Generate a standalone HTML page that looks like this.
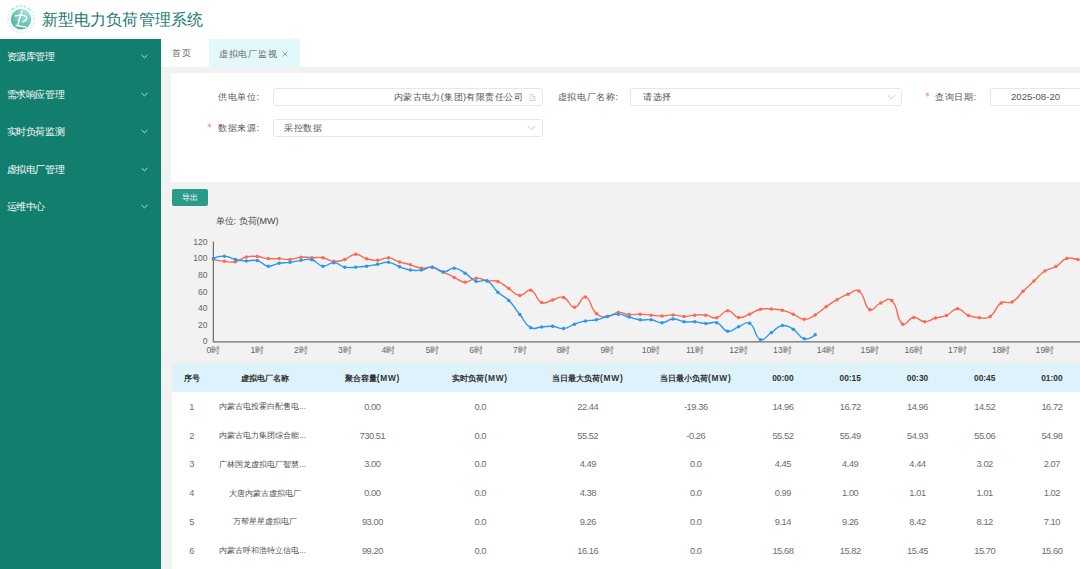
<!DOCTYPE html>
<html><head><meta charset="utf-8">
<style>
*{box-sizing:border-box;margin:0;padding:0}
html,body{width:1080px;height:569px;overflow:hidden;background:#fff;font-family:"Liberation Sans",sans-serif;position:relative}
.abs{position:absolute;white-space:nowrap}
#header{position:absolute;left:0;top:0;width:1080px;height:39px;background:#fff}
#title{left:41.5px;top:9.8px;font-size:16px;color:#217870;letter-spacing:0.2px;font-weight:500}
#side{position:absolute;left:0;top:39px;width:161px;height:530px;background:#127e6e}
.mi{position:absolute;left:6.5px;font-size:10px;color:#fff;line-height:12px;letter-spacing:-0.35px}
.chev{position:absolute;left:141px;width:7px;height:5px}
#tabs{position:absolute;left:161px;top:39px;width:919px;height:28px;background:#fff}
#content{position:absolute;left:161px;top:67px;width:919px;height:502px;background:#f2f2f2}
#card{position:absolute;left:171px;top:73px;width:909px;height:108.6px;background:#fff}
.lbl{font-size:9px;color:#555;line-height:12px;letter-spacing:0.6px}
.inp{position:absolute;border:1px solid #e6e6e6;border-radius:3px;background:#fff;height:18px}
.star{color:#f56c6c;font-size:9px}
.btn{position:absolute;left:172px;top:189px;width:36px;height:17px;background:#2a9b88;border-radius:2px;color:#fff;font-size:8px;text-align:center;line-height:18.5px;letter-spacing:0.3px}
.yl{font-size:8.6px;color:#666;text-align:right;width:30px;line-height:10px}
.xl{font-size:8.6px;color:#666;line-height:10px}
#thead{position:absolute;left:171.5px;top:363px;width:908px;height:29px;background:#ddf2fb}
#tbody{position:absolute;left:171.5px;top:392px;width:908px;height:177px;background:#fff}
.th{position:absolute;font-size:8.4px;font-weight:bold;color:#333;text-align:center;line-height:12px}
.td{position:absolute;font-size:9.3px;letter-spacing:-0.45px;color:#6e6e6e;text-align:center;line-height:12px}
.nm{font-size:8px;letter-spacing:0;color:#505050;padding-top:0.6px}
.num{letter-spacing:-0.35px}
</style></head><body>
<div id="header">
<svg class="abs" style="left:0;top:0" width="40" height="38" viewBox="0 0 40 38">
<defs><radialGradient id="lg" cx="0.72" cy="0.2" r="0.95"><stop offset="0" stop-color="#9ee0d8"/><stop offset="0.55" stop-color="#72c6b7"/><stop offset="1" stop-color="#4cab95"/></radialGradient></defs>
<circle cx="21" cy="19.2" r="13.2" fill="none" stroke="#d6efea" stroke-width="2.4" stroke-dasharray="1.2 1.8"/>
<g fill="#c2e7df"><circle cx="13" cy="9" r="1.2"/><circle cx="17" cy="6.6" r="1.1"/><circle cx="21" cy="6" r="1.1"/><circle cx="25" cy="6.6" r="1.1"/><circle cx="29" cy="9" r="1.2"/></g>
<circle cx="21" cy="19.2" r="10.2" fill="url(#lg)"/>
<g fill="none" stroke="#fff" stroke-linecap="round">
<path d="M15.3 15.9 C18.5 14.9 23.8 14.8 26.1 16.4 C27.6 18 26.2 20.9 22.8 21.7" stroke-width="1.5"/>
<path d="M22.5 10.4 C21.4 12 20.6 14 20.4 15.6 C19.9 19 19.3 22.2 17.4 25.4" stroke-width="1.3"/>
<path d="M19.6 17.6 C17.6 18.6 17.5 20.6 18.8 21" stroke-width="1"/>
<path d="M16 25.6 C19 25.3 22 26.9 25.6 26.7" stroke-width="1.4"/>
</g>
</svg>
<div id="title" class="abs">新型电力负荷管理系统</div>
</div>
<div id="side">
<div class="mi abs" style="top:11.9px">资源库管理</div>
<svg class="chev" style="top:14.9px" viewBox="0 0 7 5"><path d="M0.6 1 L3.5 3.8 L6.4 1" fill="none" stroke="#d8eee9" stroke-width="0.9"/></svg>
<div class="mi abs" style="top:49.5px">需求响应管理</div>
<svg class="chev" style="top:52.5px" viewBox="0 0 7 5"><path d="M0.6 1 L3.5 3.8 L6.4 1" fill="none" stroke="#d8eee9" stroke-width="0.9"/></svg>
<div class="mi abs" style="top:87.1px">实时负荷监测</div>
<svg class="chev" style="top:90.1px" viewBox="0 0 7 5"><path d="M0.6 1 L3.5 3.8 L6.4 1" fill="none" stroke="#d8eee9" stroke-width="0.9"/></svg>
<div class="mi abs" style="top:124.7px">虚拟电厂管理</div>
<svg class="chev" style="top:127.7px" viewBox="0 0 7 5"><path d="M0.6 1 L3.5 3.8 L6.4 1" fill="none" stroke="#d8eee9" stroke-width="0.9"/></svg>
<div class="mi abs" style="top:162.3px">运维中心</div>
<svg class="chev" style="top:165.3px" viewBox="0 0 7 5"><path d="M0.6 1 L3.5 3.8 L6.4 1" fill="none" stroke="#d8eee9" stroke-width="0.9"/></svg>
</div>
<div id="tabs">
<div class="abs" style="left:11px;top:8px;font-size:9px;color:#666;line-height:12px;letter-spacing:1.2px">首页</div>
<div class="abs" style="left:47.5px;top:0;width:91.5px;height:28px;background:#e3f8fa"></div>
<div class="abs" style="left:58px;top:8.5px;font-size:9px;color:#666;line-height:12px;letter-spacing:0.72px">虚拟电厂监视</div>
<svg class="abs" style="left:120.5px;top:12px" width="6" height="6" viewBox="0 0 6 6"><path d="M0.6 0.6L5.4 5.4M5.4 0.6L0.6 5.4" stroke="#8a8a8a" stroke-width="0.8"/></svg>
</div>
<div id="content"></div>
<div id="card"></div>
<div class="abs lbl" style="left:179.60000000000002px;width:80px;text-align:right;top:90.5px">供电单位:</div>
<div class="inp" style="left:273px;top:88px;width:270px"></div>
<div class="abs lbl" style="left:300px;width:223px;text-align:right;top:90.5px;color:#555;font-size:9px;letter-spacing:0.42px">内蒙古电力(集团)有限责任公司</div>
<svg class="abs" style="left:529px;top:93px" width="7" height="8" viewBox="0 0 7 8"><path d="M1 7.5V1.5h3v6M4 3.5h2v4M0.5 7.5h6" fill="none" stroke="#ccc" stroke-width="0.8"/></svg>
<div class="abs lbl" style="left:538.6px;width:80px;text-align:right;top:90.5px">虚拟电厂名称:</div>
<div class="inp" style="left:630px;top:88px;width:272px"></div>
<div class="abs lbl" style="left:643px;top:90.5px;color:#555">请选择</div>
<svg class="abs" style="left:887px;top:94px" width="9" height="6" viewBox="0 0 9 6"><path d="M0.8 1.2 L4.5 4.6 L8.2 1.2" fill="none" stroke="#c0c4cc" stroke-width="0.9"/></svg>
<div class="abs lbl" style="left:896.6px;width:80px;text-align:right;top:90.5px">查询日期:</div>
<svg class="abs" style="left:924.5px;top:91.8px" width="5" height="5" viewBox="0 0 5 5"><path d="M2.5 0.5V4.5M0.6 1.4L4.4 3.6M4.4 1.4L0.6 3.6" stroke="#f89a9a" stroke-width="0.9"/></svg>
<div class="inp" style="left:990px;top:88px;width:120px"></div>
<div class="abs lbl" style="left:1011px;top:90.5px;color:#555;letter-spacing:0;font-size:9.6px">2025-08-20</div>
<div class="abs lbl" style="left:179.60000000000002px;width:80px;text-align:right;top:121.5px">数据来源:</div>
<svg class="abs" style="left:207.0px;top:122.8px" width="5" height="5" viewBox="0 0 5 5"><path d="M2.5 0.5V4.5M0.6 1.4L4.4 3.6M4.4 1.4L0.6 3.6" stroke="#f89a9a" stroke-width="0.9"/></svg>
<div class="inp" style="left:273px;top:119px;width:270px"></div>
<div class="abs lbl" style="left:284px;top:121.5px;color:#555;letter-spacing:0.6px">采控数据</div>
<svg class="abs" style="left:527px;top:125px" width="9" height="6" viewBox="0 0 9 6"><path d="M0.8 1.2 L4.5 4.6 L8.2 1.2" fill="none" stroke="#c0c4cc" stroke-width="0.9"/></svg>
<div class="btn">导出</div>
<div class="abs lbl" style="left:215.5px;top:214.5px;font-size:9px;color:#444;letter-spacing:0">单位: 负荷(MW)</div>
<svg class="abs" style="left:0;top:0" width="1080" height="569" viewBox="0 0 1080 569">
<line x1="213.5" y1="324.65" x2="1080" y2="324.65" stroke="#f6f6f6" stroke-width="1"/>
<line x1="213.5" y1="308.10" x2="1080" y2="308.10" stroke="#f6f6f6" stroke-width="1"/>
<line x1="213.5" y1="291.55" x2="1080" y2="291.55" stroke="#f6f6f6" stroke-width="1"/>
<line x1="213.5" y1="275.00" x2="1080" y2="275.00" stroke="#f6f6f6" stroke-width="1"/>
<line x1="213.5" y1="258.45" x2="1080" y2="258.45" stroke="#f6f6f6" stroke-width="1"/>
<line x1="213.5" y1="241.90" x2="1080" y2="241.90" stroke="#f6f6f6" stroke-width="1"/>
<line x1="213.4" y1="241.5" x2="213.4" y2="341.6" stroke="#6e6e6e" stroke-width="1.2"/>
<line x1="212.8" y1="341.8" x2="1080" y2="341.8" stroke="#6e6e6e" stroke-width="1.3"/>
<path d="M213.50 259.44 C213.50 259.44 218.93 260.76 224.44 261.35 C229.87 261.92 230.16 262.83 235.38 261.76 C241.10 260.59 240.60 258.24 246.32 256.88 C251.54 255.63 251.84 256.12 257.26 256.55 C262.78 256.98 262.68 258.09 268.20 258.62 C273.62 259.13 273.68 258.41 279.14 258.62 C284.62 258.82 284.66 259.81 290.08 259.44 C295.60 259.07 295.49 257.56 301.02 257.13 C306.43 256.70 306.49 257.56 311.96 257.71 C317.43 257.85 317.57 256.82 322.90 257.71 C328.51 258.64 328.27 260.90 333.84 261.35 C339.21 261.77 339.55 261.14 344.78 259.44 C350.49 257.59 350.20 254.38 355.72 254.23 C361.14 254.09 360.99 257.28 366.66 258.86 C371.93 260.34 372.17 260.60 377.60 260.35 C383.11 260.10 383.18 257.49 388.54 257.87 C394.12 258.27 393.93 260.16 399.48 261.93 C404.87 263.64 404.98 263.28 410.42 264.82 C415.92 266.38 415.78 267.50 421.36 268.13 C426.72 268.74 427.06 266.37 432.30 267.30 C438.00 268.32 437.83 269.53 443.24 272.02 C448.77 274.57 448.65 274.83 454.18 277.40 C459.59 279.92 459.59 282.01 465.12 282.20 C470.53 282.38 470.49 278.52 476.06 278.14 C481.43 277.78 481.47 279.83 487.00 280.71 C492.41 281.57 492.92 279.82 497.94 281.62 C503.86 283.75 503.42 285.08 508.88 288.57 C514.36 292.07 514.18 295.20 519.82 295.60 C525.12 295.99 526.11 288.67 530.76 290.14 C537.05 292.14 535.18 299.62 541.70 302.56 C546.12 304.55 547.17 301.25 552.64 299.99 C558.11 298.73 558.83 295.94 563.58 297.51 C569.77 299.54 569.10 307.29 574.52 307.19 C580.04 307.09 580.76 295.73 585.46 297.09 C591.70 298.91 589.44 307.40 596.40 313.56 C600.38 317.09 601.94 316.70 607.34 316.46 C612.88 316.21 612.69 313.05 618.28 312.57 C623.63 312.10 623.71 314.16 629.22 314.55 C634.65 314.94 634.70 314.00 640.16 314.14 C645.64 314.29 645.63 314.66 651.10 315.13 C656.57 315.61 656.58 316.11 662.04 316.04 C667.52 315.98 667.52 314.78 672.98 314.89 C678.46 314.99 678.44 316.40 683.92 316.46 C689.38 316.52 689.37 315.47 694.86 315.13 C700.31 314.80 700.41 314.48 705.80 315.13 C711.35 315.81 711.67 318.82 716.74 317.78 C722.61 316.58 722.17 310.75 727.68 310.67 C733.11 310.58 732.83 316.53 738.62 317.45 C743.77 318.27 744.22 316.14 749.56 314.14 C755.16 312.04 754.78 310.58 760.50 309.26 C765.72 308.05 765.98 308.85 771.44 309.09 C776.92 309.34 777.06 309.02 782.38 310.25 C788.00 311.55 787.97 311.91 793.32 314.14 C798.91 316.47 798.72 319.17 804.26 319.35 C809.66 319.54 810.12 317.81 815.20 314.89 C821.06 311.52 820.55 310.66 826.14 306.78 C831.49 303.05 831.43 302.91 837.08 299.66 C842.37 296.62 842.36 296.45 848.02 294.20 C853.30 292.10 855.19 288.30 858.96 290.97 C866.13 296.04 863.04 305.93 869.90 309.67 C873.98 311.89 874.99 305.32 880.84 302.89 C885.93 300.77 888.49 297.37 891.78 300.57 C899.43 308.00 895.39 318.50 902.72 324.15 C906.33 326.94 907.94 318.10 913.66 317.45 C918.88 316.86 919.08 321.52 924.60 321.67 C930.02 321.81 930.00 319.60 935.54 318.03 C940.94 316.50 941.38 317.64 946.48 315.46 C952.32 312.97 951.95 308.68 957.42 308.68 C962.89 308.68 962.51 313.03 968.36 315.46 C973.45 317.58 973.79 317.53 979.30 317.78 C984.73 318.03 986.00 319.34 990.24 316.46 C996.94 311.89 994.47 307.33 1001.18 302.89 C1005.41 300.09 1007.55 304.40 1012.12 301.98 C1018.49 298.61 1017.54 296.59 1023.06 291.30 C1028.48 286.12 1028.50 286.14 1034.00 281.04 C1039.44 276.00 1038.85 275.06 1044.94 271.03 C1049.79 267.82 1050.80 269.48 1055.88 266.56 C1061.74 263.19 1060.76 260.42 1066.82 258.45 C1071.70 256.86 1072.30 258.82 1077.76 259.44 C1083.24 260.07 1088.70 260.93 1088.70 260.93" fill="none" stroke="#fb6a53" stroke-width="1.4"/>
<circle cx="213.50" cy="259.44" r="1.75" fill="#fb6a53"/>
<circle cx="224.44" cy="261.35" r="1.75" fill="#fb6a53"/>
<circle cx="235.38" cy="261.76" r="1.75" fill="#fb6a53"/>
<circle cx="246.32" cy="256.88" r="1.75" fill="#fb6a53"/>
<circle cx="257.26" cy="256.55" r="1.75" fill="#fb6a53"/>
<circle cx="268.20" cy="258.62" r="1.75" fill="#fb6a53"/>
<circle cx="279.14" cy="258.62" r="1.75" fill="#fb6a53"/>
<circle cx="290.08" cy="259.44" r="1.75" fill="#fb6a53"/>
<circle cx="301.02" cy="257.13" r="1.75" fill="#fb6a53"/>
<circle cx="311.96" cy="257.71" r="1.75" fill="#fb6a53"/>
<circle cx="322.90" cy="257.71" r="1.75" fill="#fb6a53"/>
<circle cx="333.84" cy="261.35" r="1.75" fill="#fb6a53"/>
<circle cx="344.78" cy="259.44" r="1.75" fill="#fb6a53"/>
<circle cx="355.72" cy="254.23" r="1.75" fill="#fb6a53"/>
<circle cx="366.66" cy="258.86" r="1.75" fill="#fb6a53"/>
<circle cx="377.60" cy="260.35" r="1.75" fill="#fb6a53"/>
<circle cx="388.54" cy="257.87" r="1.75" fill="#fb6a53"/>
<circle cx="399.48" cy="261.93" r="1.75" fill="#fb6a53"/>
<circle cx="410.42" cy="264.82" r="1.75" fill="#fb6a53"/>
<circle cx="421.36" cy="268.13" r="1.75" fill="#fb6a53"/>
<circle cx="432.30" cy="267.30" r="1.75" fill="#fb6a53"/>
<circle cx="443.24" cy="272.02" r="1.75" fill="#fb6a53"/>
<circle cx="454.18" cy="277.40" r="1.75" fill="#fb6a53"/>
<circle cx="465.12" cy="282.20" r="1.75" fill="#fb6a53"/>
<circle cx="476.06" cy="278.14" r="1.75" fill="#fb6a53"/>
<circle cx="487.00" cy="280.71" r="1.75" fill="#fb6a53"/>
<circle cx="497.94" cy="281.62" r="1.75" fill="#fb6a53"/>
<circle cx="508.88" cy="288.57" r="1.75" fill="#fb6a53"/>
<circle cx="519.82" cy="295.60" r="1.75" fill="#fb6a53"/>
<circle cx="530.76" cy="290.14" r="1.75" fill="#fb6a53"/>
<circle cx="541.70" cy="302.56" r="1.75" fill="#fb6a53"/>
<circle cx="552.64" cy="299.99" r="1.75" fill="#fb6a53"/>
<circle cx="563.58" cy="297.51" r="1.75" fill="#fb6a53"/>
<circle cx="574.52" cy="307.19" r="1.75" fill="#fb6a53"/>
<circle cx="585.46" cy="297.09" r="1.75" fill="#fb6a53"/>
<circle cx="596.40" cy="313.56" r="1.75" fill="#fb6a53"/>
<circle cx="607.34" cy="316.46" r="1.75" fill="#fb6a53"/>
<circle cx="618.28" cy="312.57" r="1.75" fill="#fb6a53"/>
<circle cx="629.22" cy="314.55" r="1.75" fill="#fb6a53"/>
<circle cx="640.16" cy="314.14" r="1.75" fill="#fb6a53"/>
<circle cx="651.10" cy="315.13" r="1.75" fill="#fb6a53"/>
<circle cx="662.04" cy="316.04" r="1.75" fill="#fb6a53"/>
<circle cx="672.98" cy="314.89" r="1.75" fill="#fb6a53"/>
<circle cx="683.92" cy="316.46" r="1.75" fill="#fb6a53"/>
<circle cx="694.86" cy="315.13" r="1.75" fill="#fb6a53"/>
<circle cx="705.80" cy="315.13" r="1.75" fill="#fb6a53"/>
<circle cx="716.74" cy="317.78" r="1.75" fill="#fb6a53"/>
<circle cx="727.68" cy="310.67" r="1.75" fill="#fb6a53"/>
<circle cx="738.62" cy="317.45" r="1.75" fill="#fb6a53"/>
<circle cx="749.56" cy="314.14" r="1.75" fill="#fb6a53"/>
<circle cx="760.50" cy="309.26" r="1.75" fill="#fb6a53"/>
<circle cx="771.44" cy="309.09" r="1.75" fill="#fb6a53"/>
<circle cx="782.38" cy="310.25" r="1.75" fill="#fb6a53"/>
<circle cx="793.32" cy="314.14" r="1.75" fill="#fb6a53"/>
<circle cx="804.26" cy="319.35" r="1.75" fill="#fb6a53"/>
<circle cx="815.20" cy="314.89" r="1.75" fill="#fb6a53"/>
<circle cx="826.14" cy="306.78" r="1.75" fill="#fb6a53"/>
<circle cx="837.08" cy="299.66" r="1.75" fill="#fb6a53"/>
<circle cx="848.02" cy="294.20" r="1.75" fill="#fb6a53"/>
<circle cx="858.96" cy="290.97" r="1.75" fill="#fb6a53"/>
<circle cx="869.90" cy="309.67" r="1.75" fill="#fb6a53"/>
<circle cx="880.84" cy="302.89" r="1.75" fill="#fb6a53"/>
<circle cx="891.78" cy="300.57" r="1.75" fill="#fb6a53"/>
<circle cx="902.72" cy="324.15" r="1.75" fill="#fb6a53"/>
<circle cx="913.66" cy="317.45" r="1.75" fill="#fb6a53"/>
<circle cx="924.60" cy="321.67" r="1.75" fill="#fb6a53"/>
<circle cx="935.54" cy="318.03" r="1.75" fill="#fb6a53"/>
<circle cx="946.48" cy="315.46" r="1.75" fill="#fb6a53"/>
<circle cx="957.42" cy="308.68" r="1.75" fill="#fb6a53"/>
<circle cx="968.36" cy="315.46" r="1.75" fill="#fb6a53"/>
<circle cx="979.30" cy="317.78" r="1.75" fill="#fb6a53"/>
<circle cx="990.24" cy="316.46" r="1.75" fill="#fb6a53"/>
<circle cx="1001.18" cy="302.89" r="1.75" fill="#fb6a53"/>
<circle cx="1012.12" cy="301.98" r="1.75" fill="#fb6a53"/>
<circle cx="1023.06" cy="291.30" r="1.75" fill="#fb6a53"/>
<circle cx="1034.00" cy="281.04" r="1.75" fill="#fb6a53"/>
<circle cx="1044.94" cy="271.03" r="1.75" fill="#fb6a53"/>
<circle cx="1055.88" cy="266.56" r="1.75" fill="#fb6a53"/>
<circle cx="1066.82" cy="258.45" r="1.75" fill="#fb6a53"/>
<circle cx="1077.76" cy="259.44" r="1.75" fill="#fb6a53"/>
<circle cx="1088.70" cy="260.93" r="1.75" fill="#fb6a53"/>
<path d="M213.50 258.45 C213.50 258.45 219.03 255.89 224.44 256.13 C229.97 256.38 229.82 258.22 235.38 259.44 C240.76 260.62 240.83 260.64 246.32 260.93 C251.77 261.22 252.10 259.37 257.26 260.60 C263.04 261.98 262.51 265.46 268.20 266.15 C273.45 266.78 273.59 264.22 279.14 263.25 C284.53 262.31 284.64 263.06 290.08 262.34 C295.58 261.61 295.51 261.00 301.02 260.35 C306.45 259.72 306.88 258.43 311.96 259.77 C317.82 261.33 317.16 265.39 322.90 266.15 C328.10 266.83 328.45 262.43 333.84 262.67 C339.39 262.92 339.10 265.98 344.78 267.14 C350.04 268.21 350.26 267.39 355.72 267.14 C361.20 266.89 361.22 266.87 366.66 266.15 C372.16 265.42 372.13 265.19 377.60 264.24 C383.07 263.29 383.23 261.74 388.54 262.34 C394.17 262.98 393.93 264.77 399.48 266.73 C404.87 268.62 404.83 269.19 410.42 270.03 C415.77 270.84 415.98 270.75 421.36 270.03 C426.92 269.30 426.99 266.66 432.30 267.14 C437.93 267.65 437.68 271.77 443.24 272.02 C448.62 272.27 448.81 267.85 454.18 268.13 C459.75 268.43 459.98 270.09 465.12 273.18 C470.92 276.67 470.00 279.16 476.06 281.29 C480.94 283.00 482.52 278.62 487.00 280.88 C493.46 284.13 492.08 287.02 497.94 292.29 C503.02 296.87 504.11 295.72 508.88 300.57 C515.05 306.85 514.24 307.65 519.82 314.55 C525.18 321.18 524.10 323.83 530.76 327.63 C535.04 330.07 536.23 327.38 541.70 327.05 C547.17 326.72 547.22 325.92 552.64 326.31 C558.16 326.70 558.26 329.15 563.58 328.62 C569.20 328.07 568.95 326.11 574.52 324.15 C579.89 322.26 579.89 322.04 585.46 320.93 C590.83 319.85 591.03 320.86 596.40 319.77 C601.97 318.63 601.81 317.88 607.34 316.46 C612.75 315.07 612.84 314.00 618.28 314.14 C623.78 314.29 623.74 315.63 629.22 317.04 C634.68 318.44 634.61 319.07 640.16 319.77 C645.55 320.44 645.72 319.06 651.10 319.77 C656.66 320.50 656.63 322.87 662.04 322.66 C667.57 322.45 667.45 319.15 672.98 318.94 C678.39 318.74 678.36 321.10 683.92 321.84 C689.30 322.55 689.42 321.40 694.86 321.84 C700.36 322.27 700.31 323.37 705.80 323.57 C711.25 323.78 711.93 320.95 716.74 322.66 C722.87 324.84 721.77 330.26 727.68 331.35 C732.71 332.28 733.06 328.78 738.62 326.72 C744.00 324.73 745.53 320.87 749.56 323.24 C756.47 327.32 753.92 336.84 760.50 339.63 C764.86 341.47 765.95 336.04 771.44 332.51 C776.89 329.01 776.60 326.39 782.38 325.56 C787.54 324.82 788.44 326.43 793.32 329.37 C799.38 333.01 798.20 337.21 804.26 338.72 C809.14 339.94 815.20 334.83 815.20 334.83" fill="none" stroke="#2a98f0" stroke-width="1.4"/>
<circle cx="213.50" cy="258.45" r="1.75" fill="#2a98f0"/>
<circle cx="224.44" cy="256.13" r="1.75" fill="#2a98f0"/>
<circle cx="235.38" cy="259.44" r="1.75" fill="#2a98f0"/>
<circle cx="246.32" cy="260.93" r="1.75" fill="#2a98f0"/>
<circle cx="257.26" cy="260.60" r="1.75" fill="#2a98f0"/>
<circle cx="268.20" cy="266.15" r="1.75" fill="#2a98f0"/>
<circle cx="279.14" cy="263.25" r="1.75" fill="#2a98f0"/>
<circle cx="290.08" cy="262.34" r="1.75" fill="#2a98f0"/>
<circle cx="301.02" cy="260.35" r="1.75" fill="#2a98f0"/>
<circle cx="311.96" cy="259.77" r="1.75" fill="#2a98f0"/>
<circle cx="322.90" cy="266.15" r="1.75" fill="#2a98f0"/>
<circle cx="333.84" cy="262.67" r="1.75" fill="#2a98f0"/>
<circle cx="344.78" cy="267.14" r="1.75" fill="#2a98f0"/>
<circle cx="355.72" cy="267.14" r="1.75" fill="#2a98f0"/>
<circle cx="366.66" cy="266.15" r="1.75" fill="#2a98f0"/>
<circle cx="377.60" cy="264.24" r="1.75" fill="#2a98f0"/>
<circle cx="388.54" cy="262.34" r="1.75" fill="#2a98f0"/>
<circle cx="399.48" cy="266.73" r="1.75" fill="#2a98f0"/>
<circle cx="410.42" cy="270.03" r="1.75" fill="#2a98f0"/>
<circle cx="421.36" cy="270.03" r="1.75" fill="#2a98f0"/>
<circle cx="432.30" cy="267.14" r="1.75" fill="#2a98f0"/>
<circle cx="443.24" cy="272.02" r="1.75" fill="#2a98f0"/>
<circle cx="454.18" cy="268.13" r="1.75" fill="#2a98f0"/>
<circle cx="465.12" cy="273.18" r="1.75" fill="#2a98f0"/>
<circle cx="476.06" cy="281.29" r="1.75" fill="#2a98f0"/>
<circle cx="487.00" cy="280.88" r="1.75" fill="#2a98f0"/>
<circle cx="497.94" cy="292.29" r="1.75" fill="#2a98f0"/>
<circle cx="508.88" cy="300.57" r="1.75" fill="#2a98f0"/>
<circle cx="519.82" cy="314.55" r="1.75" fill="#2a98f0"/>
<circle cx="530.76" cy="327.63" r="1.75" fill="#2a98f0"/>
<circle cx="541.70" cy="327.05" r="1.75" fill="#2a98f0"/>
<circle cx="552.64" cy="326.31" r="1.75" fill="#2a98f0"/>
<circle cx="563.58" cy="328.62" r="1.75" fill="#2a98f0"/>
<circle cx="574.52" cy="324.15" r="1.75" fill="#2a98f0"/>
<circle cx="585.46" cy="320.93" r="1.75" fill="#2a98f0"/>
<circle cx="596.40" cy="319.77" r="1.75" fill="#2a98f0"/>
<circle cx="607.34" cy="316.46" r="1.75" fill="#2a98f0"/>
<circle cx="618.28" cy="314.14" r="1.75" fill="#2a98f0"/>
<circle cx="629.22" cy="317.04" r="1.75" fill="#2a98f0"/>
<circle cx="640.16" cy="319.77" r="1.75" fill="#2a98f0"/>
<circle cx="651.10" cy="319.77" r="1.75" fill="#2a98f0"/>
<circle cx="662.04" cy="322.66" r="1.75" fill="#2a98f0"/>
<circle cx="672.98" cy="318.94" r="1.75" fill="#2a98f0"/>
<circle cx="683.92" cy="321.84" r="1.75" fill="#2a98f0"/>
<circle cx="694.86" cy="321.84" r="1.75" fill="#2a98f0"/>
<circle cx="705.80" cy="323.57" r="1.75" fill="#2a98f0"/>
<circle cx="716.74" cy="322.66" r="1.75" fill="#2a98f0"/>
<circle cx="727.68" cy="331.35" r="1.75" fill="#2a98f0"/>
<circle cx="738.62" cy="326.72" r="1.75" fill="#2a98f0"/>
<circle cx="749.56" cy="323.24" r="1.75" fill="#2a98f0"/>
<circle cx="760.50" cy="339.63" r="1.75" fill="#2a98f0"/>
<circle cx="771.44" cy="332.51" r="1.75" fill="#2a98f0"/>
<circle cx="782.38" cy="325.56" r="1.75" fill="#2a98f0"/>
<circle cx="793.32" cy="329.37" r="1.75" fill="#2a98f0"/>
<circle cx="804.26" cy="338.72" r="1.75" fill="#2a98f0"/>
<circle cx="815.20" cy="334.83" r="1.75" fill="#2a98f0"/>
</svg>
<div class="abs yl" style="left:177.5px;top:336.2px">0</div>
<div class="abs yl" style="left:177.5px;top:319.6px">20</div>
<div class="abs yl" style="left:177.5px;top:303.1px">40</div>
<div class="abs yl" style="left:177.5px;top:286.6px">60</div>
<div class="abs yl" style="left:177.5px;top:270.0px">80</div>
<div class="abs yl" style="left:177.5px;top:253.4px">100</div>
<div class="abs yl" style="left:177.5px;top:236.9px">120</div>
<div class="abs xl" style="left:193.5px;width:40px;text-align:center;top:345px">0时</div>
<div class="abs xl" style="left:237.3px;width:40px;text-align:center;top:345px">1时</div>
<div class="abs xl" style="left:281.0px;width:40px;text-align:center;top:345px">2时</div>
<div class="abs xl" style="left:324.8px;width:40px;text-align:center;top:345px">3时</div>
<div class="abs xl" style="left:368.5px;width:40px;text-align:center;top:345px">4时</div>
<div class="abs xl" style="left:412.3px;width:40px;text-align:center;top:345px">5时</div>
<div class="abs xl" style="left:456.1px;width:40px;text-align:center;top:345px">6时</div>
<div class="abs xl" style="left:499.8px;width:40px;text-align:center;top:345px">7时</div>
<div class="abs xl" style="left:543.6px;width:40px;text-align:center;top:345px">8时</div>
<div class="abs xl" style="left:587.3px;width:40px;text-align:center;top:345px">9时</div>
<div class="abs xl" style="left:631.1px;width:40px;text-align:center;top:345px">10时</div>
<div class="abs xl" style="left:674.9px;width:40px;text-align:center;top:345px">11时</div>
<div class="abs xl" style="left:718.6px;width:40px;text-align:center;top:345px">12时</div>
<div class="abs xl" style="left:762.4px;width:40px;text-align:center;top:345px">13时</div>
<div class="abs xl" style="left:806.1px;width:40px;text-align:center;top:345px">14时</div>
<div class="abs xl" style="left:849.9px;width:40px;text-align:center;top:345px">15时</div>
<div class="abs xl" style="left:893.7px;width:40px;text-align:center;top:345px">16时</div>
<div class="abs xl" style="left:937.4px;width:40px;text-align:center;top:345px">17时</div>
<div class="abs xl" style="left:981.2px;width:40px;text-align:center;top:345px">18时</div>
<div class="abs xl" style="left:1024.9px;width:40px;text-align:center;top:345px">19时</div>
<div id="thead"></div>
<div id="tbody"></div>
<div class="th abs" style="left:171.6px;width:40.0px;top:371.5px">序号</div>
<div class="th abs" style="left:210.6px;width:108.0px;top:371.5px">虚拟电厂名称</div>
<div class="th abs" style="left:318.9px;width:107.0px;top:371.5px">聚合容量<span style="letter-spacing:0.75px">(MW)</span></div>
<div class="th abs" style="left:426.7px;width:107.0px;top:371.5px">实时负荷<span style="letter-spacing:0.75px">(MW)</span></div>
<div class="th abs" style="left:534.3px;width:107.0px;top:371.5px">当日最大负荷<span style="letter-spacing:0.75px">(MW)</span></div>
<div class="th abs" style="left:642.3px;width:107.0px;top:371.5px">当日最小负荷<span style="letter-spacing:0.75px">(MW)</span></div>
<div class="th abs" style="left:749.4px;width:67.0px;top:371.5px">00:00</div>
<div class="th abs" style="left:816.7px;width:67.0px;top:371.5px">00:15</div>
<div class="th abs" style="left:884.0px;width:67.0px;top:371.5px">00:30</div>
<div class="th abs" style="left:951.2px;width:67.0px;top:371.5px">00:45</div>
<div class="th abs" style="left:1018.4px;width:67.0px;top:371.5px">01:00</div>
<div class="td abs" style="left:171.6px;width:40.0px;top:400.7px">1</div>
<div class="td abs nm" style="left:219.2px;text-align:left;top:400.7px">内蒙古电投霍白配售电...</div>
<div class="td abs" style="left:318.9px;width:107.0px;top:400.7px">0.00</div>
<div class="td abs" style="left:426.7px;width:107.0px;top:400.7px">0.0</div>
<div class="td abs" style="left:534.3px;width:107.0px;top:400.7px">22.44</div>
<div class="td abs" style="left:642.3px;width:107.0px;top:400.7px">-19.36</div>
<div class="td abs" style="left:749.4px;width:67.0px;top:400.7px">14.96</div>
<div class="td abs" style="left:816.7px;width:67.0px;top:400.7px">16.72</div>
<div class="td abs" style="left:884.0px;width:67.0px;top:400.7px">14.96</div>
<div class="td abs" style="left:951.2px;width:67.0px;top:400.7px">14.52</div>
<div class="td abs" style="left:1018.4px;width:67.0px;top:400.7px">16.72</div>
<div class="td abs" style="left:171.6px;width:40.0px;top:429.5px">2</div>
<div class="td abs nm" style="left:219.2px;text-align:left;top:429.5px">内蒙古电力集团综合能...</div>
<div class="td abs" style="left:318.9px;width:107.0px;top:429.5px">730.51</div>
<div class="td abs" style="left:426.7px;width:107.0px;top:429.5px">0.0</div>
<div class="td abs" style="left:534.3px;width:107.0px;top:429.5px">55.52</div>
<div class="td abs" style="left:642.3px;width:107.0px;top:429.5px">-0.26</div>
<div class="td abs" style="left:749.4px;width:67.0px;top:429.5px">55.52</div>
<div class="td abs" style="left:816.7px;width:67.0px;top:429.5px">55.49</div>
<div class="td abs" style="left:884.0px;width:67.0px;top:429.5px">54.93</div>
<div class="td abs" style="left:951.2px;width:67.0px;top:429.5px">55.06</div>
<div class="td abs" style="left:1018.4px;width:67.0px;top:429.5px">54.98</div>
<div class="td abs" style="left:171.6px;width:40.0px;top:458.3px">3</div>
<div class="td abs nm" style="left:219.2px;text-align:left;top:458.3px">广林国龙虚拟电厂智慧...</div>
<div class="td abs" style="left:318.9px;width:107.0px;top:458.3px">3.00</div>
<div class="td abs" style="left:426.7px;width:107.0px;top:458.3px">0.0</div>
<div class="td abs" style="left:534.3px;width:107.0px;top:458.3px">4.49</div>
<div class="td abs" style="left:642.3px;width:107.0px;top:458.3px">0.0</div>
<div class="td abs" style="left:749.4px;width:67.0px;top:458.3px">4.45</div>
<div class="td abs" style="left:816.7px;width:67.0px;top:458.3px">4.49</div>
<div class="td abs" style="left:884.0px;width:67.0px;top:458.3px">4.44</div>
<div class="td abs" style="left:951.2px;width:67.0px;top:458.3px">3.02</div>
<div class="td abs" style="left:1018.4px;width:67.0px;top:458.3px">2.07</div>
<div class="td abs" style="left:171.6px;width:40.0px;top:487.1px">4</div>
<div class="td abs nm" style="left:210.6px;width:108.0px;top:487.1px">大唐内蒙古虚拟电厂</div>
<div class="td abs" style="left:318.9px;width:107.0px;top:487.1px">0.00</div>
<div class="td abs" style="left:426.7px;width:107.0px;top:487.1px">0.0</div>
<div class="td abs" style="left:534.3px;width:107.0px;top:487.1px">4.38</div>
<div class="td abs" style="left:642.3px;width:107.0px;top:487.1px">0.0</div>
<div class="td abs" style="left:749.4px;width:67.0px;top:487.1px">0.99</div>
<div class="td abs" style="left:816.7px;width:67.0px;top:487.1px">1.00</div>
<div class="td abs" style="left:884.0px;width:67.0px;top:487.1px">1.01</div>
<div class="td abs" style="left:951.2px;width:67.0px;top:487.1px">1.01</div>
<div class="td abs" style="left:1018.4px;width:67.0px;top:487.1px">1.02</div>
<div class="td abs" style="left:171.6px;width:40.0px;top:515.9px">5</div>
<div class="td abs nm" style="left:210.6px;width:108.0px;top:515.9px">万帮星星虚拟电厂</div>
<div class="td abs" style="left:318.9px;width:107.0px;top:515.9px">93.00</div>
<div class="td abs" style="left:426.7px;width:107.0px;top:515.9px">0.0</div>
<div class="td abs" style="left:534.3px;width:107.0px;top:515.9px">9.26</div>
<div class="td abs" style="left:642.3px;width:107.0px;top:515.9px">0.0</div>
<div class="td abs" style="left:749.4px;width:67.0px;top:515.9px">9.14</div>
<div class="td abs" style="left:816.7px;width:67.0px;top:515.9px">9.26</div>
<div class="td abs" style="left:884.0px;width:67.0px;top:515.9px">8.42</div>
<div class="td abs" style="left:951.2px;width:67.0px;top:515.9px">8.12</div>
<div class="td abs" style="left:1018.4px;width:67.0px;top:515.9px">7.10</div>
<div class="td abs" style="left:171.6px;width:40.0px;top:544.7px">6</div>
<div class="td abs nm" style="left:219.2px;text-align:left;top:544.7px">内蒙古呼和浩特立信电...</div>
<div class="td abs" style="left:318.9px;width:107.0px;top:544.7px">99.20</div>
<div class="td abs" style="left:426.7px;width:107.0px;top:544.7px">0.0</div>
<div class="td abs" style="left:534.3px;width:107.0px;top:544.7px">16.16</div>
<div class="td abs" style="left:642.3px;width:107.0px;top:544.7px">0.0</div>
<div class="td abs" style="left:749.4px;width:67.0px;top:544.7px">15.68</div>
<div class="td abs" style="left:816.7px;width:67.0px;top:544.7px">15.82</div>
<div class="td abs" style="left:884.0px;width:67.0px;top:544.7px">15.45</div>
<div class="td abs" style="left:951.2px;width:67.0px;top:544.7px">15.70</div>
<div class="td abs" style="left:1018.4px;width:67.0px;top:544.7px">15.60</div>
</body></html>
